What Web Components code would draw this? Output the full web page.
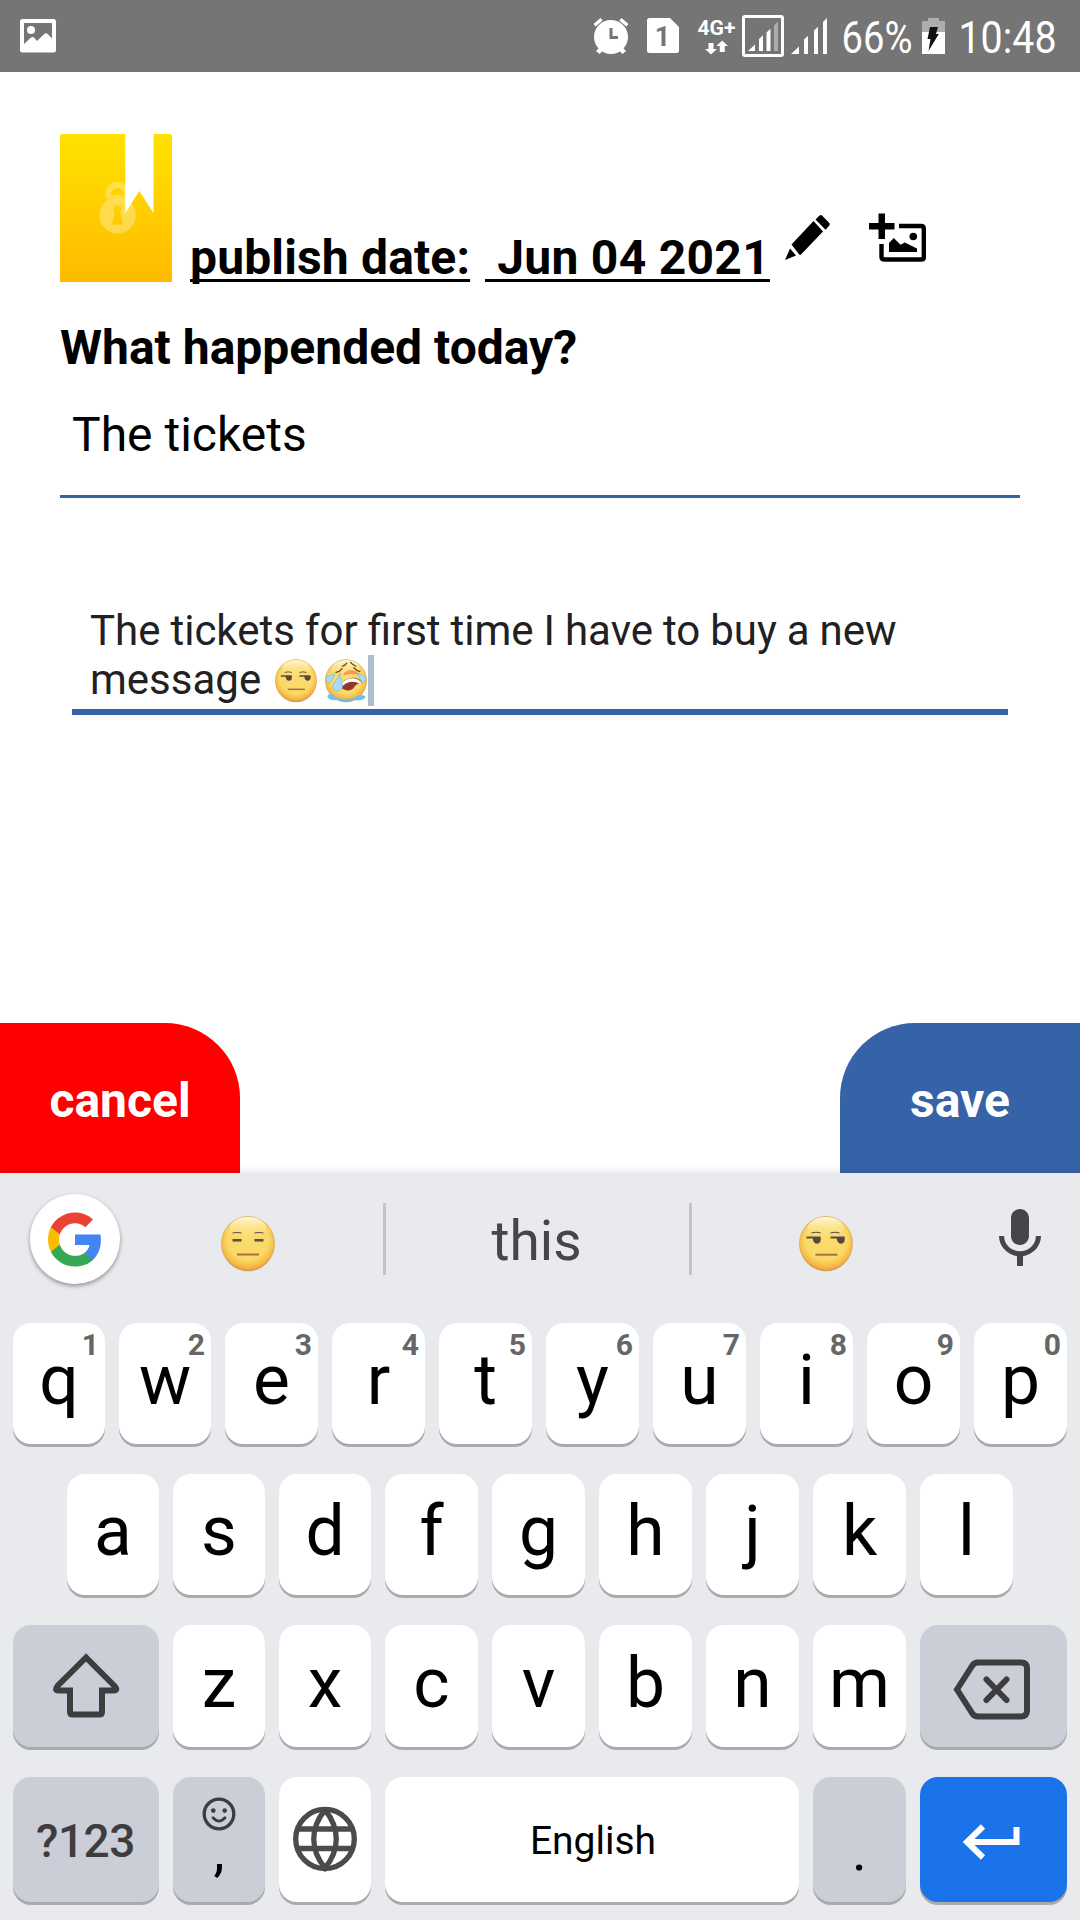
<!DOCTYPE html>
<html lang="en">
<head>
<meta charset="utf-8">
<title>Diary entry</title>
<style>
html,body{margin:0;padding:0;background:#fff}
body{width:1080px;height:1920px;overflow:hidden;font-family:Roboto,"Noto Sans",sans-serif;color:#000}
</style>
</head>
<body>
<diary-app></diary-app>
<script>
const define = (name, html) => {
  const t = document.createElement('template');
  t.innerHTML = html;
  customElements.define(name, class extends HTMLElement {
    constructor() {
      super();
      this.attachShadow({mode: 'open'}).appendChild(t.content.cloneNode(true));
    }
  });
};

/* Faces: a shared glossy ball, with a mood chosen by attribute */
const MOODS = {
  expressionless: `<g stroke="#5d4a4a" fill="none"><path d="M11.5 17q4.500-1 9 0M33.500 17q4.500-1 9 0" stroke-width="1.200"/><path d="M11.500 24.300h9M33.500 24.300h9" stroke-width="2.400"/><path d="M16 38.500h22" stroke="#a9713f" stroke-width="2"/></g>`,
  unamused: `<g stroke="#5d4a4a" fill="none"><path d="M12.500 17q4.500-1.500 9 0M31.500 17q4.500-1.500 9 0" stroke-width="1.200"/><path d="M7.500 21.500h14M31.500 21.500h14" stroke-width="1.800"/><path d="M16.500 38.700h22" stroke="#a9713f" stroke-width="2"/></g><path d="M13.500 21.500h8.200v2.500a3.800 3.800 0 0 1-7.300 1.300zM37.500 21.500h8.200v2.500a3.800 3.800 0 0 1-7.300 1.300z" fill="#5a4640"/>`,
  crying: `<path d="M3 48c2-5 7-3 8-1 4 3 7 4 14 4s14-1 17-4c3 0 8-2 10 1-1 5-11 6-15 4-9 3-17 2-22 0-5 2-10 0-12-4z" fill="#6fbdf3"/><g fill="none" stroke="#6b4210" stroke-width="1.500" stroke-linecap="round"><path d="M22 9q4-1 6-4M33 4q3 4 7 5M14 17q5-1 8-5M37 11q4 4 8 5"/></g><path d="M25 17q9-6 17 0l3 4q-11-4-22 0z" fill="#f79a55"/><path d="M20 36c1-13 23-17 28-5-7-1-9 3-12 7-5 4-12 2-16-2z" fill="#92392c"/><path d="M21 31c7-8 20-9 26-1l-2 2c-7-5-17-4-23 3z" fill="#fff"/><path d="M19 18c0 8 5 12 3 19-2 5-12 5-12-2 1-7 8-9 9-17zM0 24c5-1 6-4 12-5-1 6-6 14-9 10zM42 18c4 2 10 3 11 8-1 5-8 3-11-8z" fill="#a9dcfb" stroke="#62b5ea" stroke-width=".8"/>`
};
customElements.define('face-icon', class extends HTMLElement {
  constructor() { super(); this.attachShadow({mode: 'open'}); }
  connectedCallback() {
    this.shadowRoot.innerHTML = `<style>:host{display:block;width:54px;height:56px;white-space:normal;flex:none}svg{display:block;width:100%;height:100%}</style>
    <svg viewBox="0 0 54 56"><defs>
      <radialGradient id="b" cx=".5" cy=".42" r=".6"><stop offset="0" stop-color="#fbdc6c"/><stop offset=".65" stop-color="#f9d967"/><stop offset=".86" stop-color="#f6b944"/><stop offset="1" stop-color="#ee8d3c"/></radialGradient>
      <linearGradient id="h" x2="0" y2="1"><stop offset="0" stop-color="#fff8dd" stop-opacity=".95"/><stop offset="1" stop-color="#fbe48d" stop-opacity="0"/></linearGradient></defs>
      <ellipse cx="27" cy="28.800" rx="26" ry="26.500" fill="#5c4b3b" opacity=".5"/>
      <ellipse cx="27" cy="27.500" rx="26.500" ry="27" fill="url(#b)" stroke="#d9a443" stroke-width=".7"/>
      <ellipse cx="27" cy="12" rx="18" ry="11" fill="url(#h)"/>${MOODS[this.getAttribute('mood')]}
    </svg>`;
  }
});

define('status-bar', `<style>
:host{display:flex;height:72px;background:#757575;flex:none}
svg{display:block}.left{flex:1}
text{font-family:Roboto,"Noto Sans",sans-serif}
</style>
<svg class="left" width="580" height="72" viewBox="0 0 580 72" preserveAspectRatio="xMinYMin"><rect x="20" y="19" width="36" height="33.500" rx="2.500" fill="#fff"/><path d="M24 23h28v15.500l-4.500-4.700q-1.500-1.300-3 0L37 41l-3-3.500q-1.500-1.200-3 0L24 44z" fill="#757575"/><circle cx="31" cy="30" r="4" fill="#fff"/></svg>
<svg width="500" height="72" viewBox="580 0 500 72">
<g fill="#fff"><circle cx="611" cy="37" r="17"/><path d="M593.500 24l7-6 2.200 2.600-7 6zM628.500 24l-7-6-2.200 2.600 7 6zM596 51l4-4 3.500 3-4 4zM626 51l-4-4-3.500 3 4 4z"/></g>
<path d="M611 28v9.500h7" fill="none" stroke="#757575" stroke-width="3"/>
<path d="M649.500 18h20.500l9 9v23.500q0 2.500-2.500 2.500h-27q-2.500 0-2.500-2.500v-30q0-2.500 2.500-2.500z" fill="#fff"/>
<text x="662.500" y="46" font-size="27" font-weight="700" text-anchor="middle" fill="#757575">1</text>
<text x="697.500" y="35.300" font-size="20" font-weight="700" fill="#fff" textLength="38" lengthAdjust="spacingAndGlyphs">4G+</text>
<path d="M708.500 43h5v6h3.500l-6 5.500-6-5.500h3.500zM719.800 52h5v-6h3.200l-5.800-5.500-5.800 5.500h3.400z" fill="#fff"/>
<rect x="743.500" y="16.500" width="39" height="39" rx="1.500" fill="none" stroke="#fff" stroke-width="3"/>
<path d="M748 51l7-6.500V51zM759 39l4-3.700V51h-4zM766.500 32.500l4-3.800V51h-4z" fill="#fff"/><path d="M774 25.500l4-4V51h-4z" fill="#adadad"/>
<path d="M791 54l8-7.500V54zM804 39.500l4-3.700V54h-4zM814 30.500l4-3.700V54h-4zM823 22l4-4v36h-4z" fill="#fff"/>
<text x="841.500" y="52.800" font-size="45" fill="#fff" textLength="71" lengthAdjust="spacingAndGlyphs">66%</text>
<path d="M922 21h6v-3h11v3h6v11h-23z" fill="#adadad"/><path d="M922 32h23v22h-23z" fill="#fff"/><path d="M930 27h8l-2 7h2.800L928.500 51l2-12h-3z" fill="#111"/>
<text x="958.500" y="52.800" font-size="45" fill="#fff" textLength="98" lengthAdjust="spacingAndGlyphs">10:48</text>
</svg>`);

define('entry-header', `<style>
:host{display:flex;align-items:flex-start;height:152px}
svg{display:block;flex:none}
.t{font:700 48px/56px Roboto,sans-serif;white-space:pre;margin-top:96px;letter-spacing:.15px;text-decoration:underline 3px;text-underline-offset:5px;text-decoration-skip-ink:none}
.p{margin-left:18px;width:280px}.d{margin-left:15px;width:285px;letter-spacing:.28px}
</style>
<svg width="112" height="148" viewBox="60 134 112 148"><defs><linearGradient id="g" x2="0" y2="1"><stop offset="0" stop-color="#ffe000"/><stop offset=".15" stop-color="#ffdd00"/><stop offset="1" stop-color="#ffba00"/></linearGradient></defs>
<path d="M62 134h108q2 0 2 2v146H60V136q0-2 2-2z" fill="url(#g)"/>
<g fill="#fff" fill-opacity=".3"><path fill-rule="evenodd" d="M106.800 199.500A12 12 0 1 1 128 199.500Q117.500 194 106.800 199.500ZM111.200 196Q117.500 193 123.800 196A6.500 6.500 0 1 0 111.200 196Z"/><path fill-rule="evenodd" d="M117.500 197a18.200 18.200 0 1 0 .1 0zM117.500 205a4.200 4.200 0 0 1 2.800 7.400l2.700 12h-11l2.700-12a4.200 4.200 0 0 1 2.800-7.400z"/></g>
<path d="M125.300 134h28.200v79L139.300 191l-14 22z" fill="#fff"/></svg>
<span class="t p">publish date:</span><span class="t d">&nbsp;Jun 04 2021</span>
<svg width="65" height="148" viewBox="770 134 65 148"><path d="M785 260l5-11.500 6 7zM791.500 244.500L813.500 221l9.500 10.500-22 23q-1 1-2-.2zM815.500 219.500l3.800-3.800q1.500-1.500 3 0l6.800 7q1.300 1.500 0 3l-3.600 4z" fill="#000"/></svg>
<svg width="95" height="148" viewBox="835 134 95 148"><path d="M878.500 213.500h6.500v9.500h9.500v6.500H885v9.500h-6.500v-9.500H869V223h9.500z"/><path d="M899 226h22q2.800 0 2.800 2.800v29q0 1.700-2.800 1.700h-36.500q-3 0-3-2.500V244" fill="none" stroke="#000" stroke-width="4.400"/><path d="M889 252v-9l4.800-5 6.700 6.700 4.300-2.200 12.200 6v3.500z"/><circle cx="913.300" cy="236.500" r="3.800"/></svg>`);

define('line-field', `<style>
:host{display:block;height:93px;margin-top:26px;border-bottom:3px solid #3662a7;font:400 48px/56px Roboto,sans-serif}
div{padding:5px 0 0 12px}
</style><div><slot></slot></div>`);

define('message-field', `<style>
:host{display:block;margin:108px 12px 0;padding:0 18px 5px;border-bottom:6px solid #3662a7;font:400 42px/49px Roboto,sans-serif;word-spacing:-.45px;color:#212121}
p{margin:0;height:49px;white-space:pre}
p.two{display:flex;align-items:flex-start}
i{width:6px;height:51px;background:#b0bed1}
::slotted(face-icon){width:42px;height:44px;margin-top:4px}
.f{display:flex;width:93px;gap:8px;margin-left:4px}
</style><p><slot name="first"></slot></p><p class="two"><slot name="second"></slot><span class="f"><slot name="faces"></slot></span><i></i></p>`);

define('corner-button', `<style>
:host{display:flex;box-sizing:border-box;width:240px;height:150px;padding-top:5px;align-items:center;justify-content:center;color:#fff;font:700 48px/56px Roboto,sans-serif;background:var(--tone);border-radius:var(--corner)}
</style><slot></slot>`);

define('google-badge', `<style>
:host{display:flex;width:90px;height:90px;border-radius:50%;background:#fff;box-shadow:0 2px 4px rgba(0,0,0,.38);align-items:center;justify-content:center;flex:none}
</style><svg width="54" height="55" viewBox="2 2 44 44"><path fill="#4285F4" d="M45.120 24.500c0-1.560-.14-3.060-.4-4.500H24v8.510h11.840c-.51 2.750-2.060 5.080-4.390 6.640v5.520h7.110c4.160-3.830 6.560-9.470 6.560-16.170z"/><path fill="#34A853" d="M24 46c5.940 0 10.920-1.970 14.560-5.330l-7.110-5.520c-1.970 1.320-4.490 2.100-7.450 2.100-5.730 0-10.580-3.870-12.310-9.070H4.340v5.700C7.960 41.070 15.400 46 24 46z"/><path fill="#FBBC05" d="M11.690 28.180C11.250 26.860 11 25.450 11 24s.25-2.860.69-4.180v-5.700H4.340C2.850 17.090 2 20.450 2 24c0 3.550.85 6.910 2.340 9.880l7.350-5.700z"/><path fill="#EA4335" d="M24 10.750c3.230 0 6.130 1.110 8.410 3.290l6.310-6.310C34.910 4.180 29.930 2 24 2 15.400 2 7.960 6.930 4.340 14.120l7.350 5.700c1.730-5.200 6.580-9.070 12.310-9.070z"/></svg>`);

define('suggestion-strip', `<style>
:host{display:flex;height:150px;box-sizing:border-box;padding-bottom:18px;align-items:center}
.g{width:83px;padding-left:30px}.s{display:flex;justify-content:center;align-items:center}
.bar{width:3px;height:72px;background:#c4c5c8}
.w{width:301px;padding:4px 2px 0 0;font:400 55px/64px Roboto,sans-serif;color:#454648}
.m{width:120px}face-icon{margin-top:9px}
</style>
<div class="g"><google-badge></google-badge></div>
<div class="s" style="width:270px"><face-icon mood="expressionless"></face-icon></div><div class="bar"></div>
<div class="s w">this</div><div class="bar"></div>
<div class="s" style="width:268px"><face-icon mood="unamused"></face-icon></div>
<div class="s m"><svg width="72" height="72" viewBox="0 0 24 24" fill="#454648"><path d="M12 14c1.660 0 2.990-1.340 2.990-3L15 5c0-1.660-1.340-3-3-3S9 3.340 9 5v6c0 1.660 1.340 3 3 3zm5.300-3c0 3-2.540 5.100-5.300 5.100S6.700 14 6.700 11H5c0 3.410 2.720 6.230 6 6.720V21h2v-3.280c3.280-.48 6-3.300 6-6.720h-1.700z"/></svg></div>`);

define('key-cap', `<style>
:host{display:flex;position:relative;flex:0 0 93px;min-width:0;justify-content:center;align-items:center;border-radius:18px;background:#fff;box-shadow:0 3px 0 #a9aaac;font:400 69.500px/84px Roboto,sans-serif;box-sizing:border-box}
:host([letter]){padding-bottom:5px}
:host([narrow]){flex-basis:92px}
:host([tone=gray]){background:#cbced6}
:host([tone=blue]){background:#1b73e9;padding:5px 5px 0 0}
:host([wide]){flex-basis:146px}
:host([wide][slot=end]){flex-basis:147px}
:host([size=bar]){flex-basis:414px;font-size:39px;padding:2px 0 0 2px}
:host([size=label]){font-size:46px;font-weight:500;color:#3d3d3f;padding:2px 1px 0 0}
:host([size=punct]){font-size:56px}
:host([size=globe]){padding-bottom:2px}
:host([size=back]){padding:6px 4px 0 0}
::slotted([slot=hint]){position:absolute;right:6px;top:8px;font:700 30px/28px Roboto,sans-serif;color:#666}
::slotted(svg){display:block;flex:none}
</style><slot></slot><slot name="hint"></slot>`);

/* One row of letters; the first few caps are a pixel narrower so that the row fills its width exactly */
customElements.define('key-row', class extends HTMLElement {
  constructor() { super(); this.attachShadow({mode: 'open'}); }
  connectedCallback() {
    const hints = this.getAttribute('hints') || '';
    const narrow = +(this.getAttribute('narrow') || 0);
    const caps = [...(this.getAttribute('keys') || '')].map((k, i) =>
      `<key-cap letter${i < narrow ? ' narrow' : ''}>${k}${hints[i] ? `<span slot="hint">${hints[i]}</span>` : ''}</key-cap>`).join('');
    this.shadowRoot.innerHTML = `<style>:host{display:flex;gap:14px;padding:0 13px;height:121px;margin-bottom:30px}
      :host([inset]){padding:0 67px}</style><slot name="start"></slot>${caps}<slot name="end"></slot>`;
  }
});

define('soft-keyboard', `<style>
:host{display:block;height:747px;background:#e8eaed;box-shadow:0 0 9px rgba(0,0,0,.14);position:relative}
.comma{display:flex;flex-direction:column;align-items:center;height:126px}
.comma svg{margin-top:20px}.comma span{line-height:60px;height:60px;margin-top:-10px}
.dot{padding-top:22px}
</style>
<suggestion-strip></suggestion-strip>
<key-row keys="qwertyuiop" hints="1234567890" narrow="2"></key-row>
<key-row keys="asdfghjkl" inset narrow="3"></key-row>
<key-row keys="zxcvbnm" narrow="2" style="height:122px">
<key-cap slot="start" wide tone="gray"><svg width="72" height="72" viewBox="50 1650 72 72" fill="none" stroke="#3d3d3f" stroke-width="6"><path d="M86 1657.500L57.500 1686Q54 1690.500 58.500 1690.500H70V1712Q70 1714.500 72.500 1714.500H99.500Q102 1714.500 102 1712V1690.500H113.500Q118.500 1690.500 114.500 1686Z"/></svg></key-cap>
<key-cap slot="end" wide tone="gray" size="back"><svg width="80" height="66" viewBox="952 1655.500 80 66" fill="none" stroke="#3d3d3f" stroke-width="6"><path d="M957 1689l15-23.500q2-3.500 6-3.500h43q6 0 6 6v42q0 6-6 6h-43q-4 0-6-3.500z"/><path d="M986.500 1679l20 20.500M1006.500 1679l-20 20.500" stroke-linecap="round"/></svg></key-cap>
</key-row>
<key-row style="height:125px">
<key-cap slot="start" wide tone="gray" size="label"><span style="letter-spacing:-.5px">?123</span></key-cap>
<key-cap slot="start" narrow size="punct" tone="gray"><div class="comma"><svg width="34" height="34" viewBox="0 0 34 34" fill="none" stroke="#3d3d3f"><circle cx="17" cy="17" r="14.800" stroke-width="3.300"/><path d="M11 20.800q6 6.500 12 0" stroke-width="2.800" stroke-linecap="round"/><g fill="#3d3d3f" stroke="none"><circle cx="11.300" cy="13.600" r="2.300"/><circle cx="22.700" cy="13.600" r="2.300"/></g></svg><span>,</span></div></key-cap>
<key-cap slot="start" narrow size="globe"><svg width="64" height="66" viewBox="-32 -33 64 66" fill="none" stroke="#4b4b4b" stroke-width="5.300"><ellipse rx="29.300" ry="29.600"/><path d="M-27.500-10h55M-27.500 9.500h55M0-29C-15-11-15 11 0 29C15 11 15-11 0-29"/></svg></key-cap>
<key-cap slot="start" size="bar"><span>English</span></key-cap>
<key-cap slot="end" size="punct" tone="gray"><span class="dot">.</span></key-cap>
<key-cap slot="end" wide tone="blue"><svg width="60" height="38" viewBox="961.500 1823 60 38" fill="none" stroke="#fff" stroke-width="6"><path d="M983.500 1826.500L967.500 1842l16 15.500M967.500 1842h49.500v-15"/></svg></key-cap>
</key-row>`);

define('diary-app', `<style>
:host{display:flex;flex-direction:column;width:1080px;height:1920px;background:#fff}
main{flex:1;padding:62px 60px 0}
h1{margin:34px 0 0;font:700 48px/56px Roboto,sans-serif}
footer{display:flex;justify-content:space-between}
</style>
<status-bar></status-bar>
<main><entry-header></entry-header><h1>What happended today?</h1>
<line-field>The tickets</line-field>
<message-field><span slot="first">The tickets for first time I have to buy a new</span><span slot="second">message </span><face-icon slot="faces" mood="unamused"></face-icon><face-icon slot="faces" mood="crying"></face-icon></message-field></main>
<footer><corner-button style="--tone:#f00;--corner:0 75px 0 0">cancel</corner-button><corner-button style="--tone:#3662a7;--corner:75px 0 0 0">save</corner-button></footer>
<soft-keyboard></soft-keyboard>`);
</script>
</body>
</html>
